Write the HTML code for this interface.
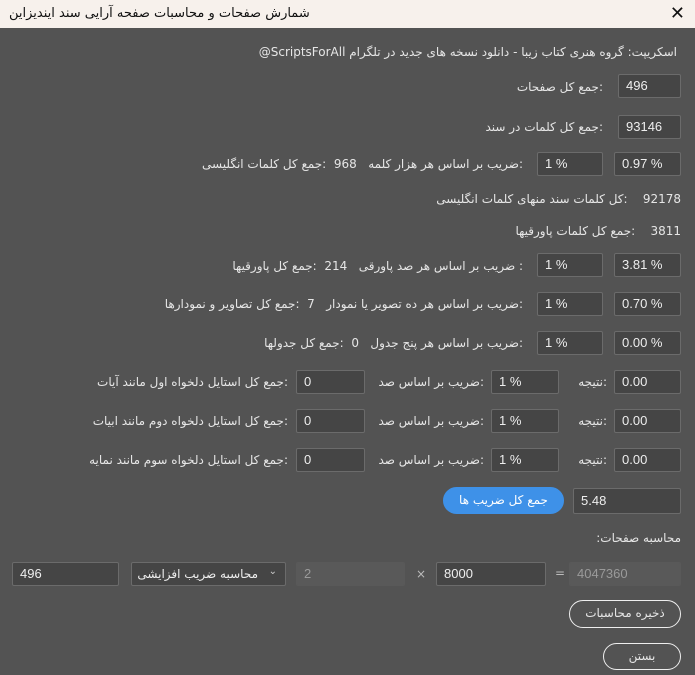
<!DOCTYPE html>
<html><head><meta charset="utf-8"><style>
body{margin:0;width:695px;height:675px;background:#535353;position:relative;overflow:hidden;font-family:"DejaVu Sans","Liberation Sans",sans-serif;font-size:12px;color:#e6e6e6}
.title{position:absolute;left:0;top:0;width:695px;height:28px;background:#f7f1ec;color:#111;}
.title span{position:absolute;left:9px;top:6px;font-size:13px}
.title b{position:absolute;right:10px;top:3px;font-weight:normal;font-size:18px}
.l{position:absolute;white-space:nowrap;direction:rtl;line-height:14px}
.i{position:absolute;box-sizing:border-box;background:#454545;border:1px solid #6b6b6b;border-radius:2px;color:#eee;padding-left:7px;line-height:22px;font-family:"Liberation Sans",sans-serif;font-size:13px;white-space:nowrap;overflow:hidden}
.d{background:#595959;border-color:#595959;color:#9a9a9a}
.btn{position:absolute;box-sizing:border-box;border:1px solid #eee;border-radius:14px;text-align:center;line-height:25px;direction:rtl}
</style></head><body>
<div class="title"><span>شمارش صفحات و محاسبات صفحه آرایی سند ایندیزاین</span><b>✕</b></div>
<div class="l" style="right:18px;top:45px">اسکریپت: گروه هنری کتاب زیبا - دانلود نسخه های جدید در تلگرام ScriptsForAll@</div>

<div class="i" style="left:618px;top:74px;width:63px;height:24px">496</div>
<div class="l" style="right:92px;top:80px">:جمع کل صفحات</div>
<div class="i" style="left:618px;top:115px;width:63px;height:24px">93146</div>
<div class="l" style="right:92px;top:120px">:جمع کل کلمات در سند</div>

<div class="i" style="left:614px;top:152px;width:67px;height:24px">0.97 %</div>
<div class="i" style="left:537px;top:152px;width:66px;height:24px">1 %</div>
<div class="l" style="right:172px;top:157px">:ضریب بر اساس هر هزار کلمه&nbsp;&nbsp; 968&nbsp; :جمع کل کلمات انگلیسی</div>

<div class="l" style="right:14px;top:192px">92178&nbsp;&nbsp;&nbsp; :کل کلمات سند منهای کلمات انگلیسی</div>
<div class="l" style="right:14px;top:224px">3811&nbsp;&nbsp;&nbsp; :جمع کل کلمات پاورقیها</div>

<div class="i" style="left:614px;top:253px;width:67px;height:24px">3.81 %</div>
<div class="i" style="left:537px;top:253px;width:66px;height:24px">1 %</div>
<div class="l" style="right:172px;top:259px">: ضریب بر اساس هر صد پاورقی&nbsp;&nbsp; 214&nbsp; :جمع کل پاورقیها</div>

<div class="i" style="left:614px;top:292px;width:67px;height:24px">0.70 %</div>
<div class="i" style="left:537px;top:292px;width:66px;height:24px">1 %</div>
<div class="l" style="right:172px;top:297px">:ضریب بر اساس هر ده تصویر یا نمودار&nbsp;&nbsp; 7&nbsp; :جمع کل تصاویر و نمودارها</div>

<div class="i" style="left:614px;top:331px;width:67px;height:24px">0.00 %</div>
<div class="i" style="left:537px;top:331px;width:66px;height:24px">1 %</div>
<div class="l" style="right:172px;top:336px">:ضریب بر اساس هر پنج جدول&nbsp;&nbsp; 0&nbsp; :جمع کل جدولها</div>

<div class="i" style="left:614px;top:370px;width:67px;height:24px">0.00</div>
<div class="l" style="right:88px;top:375px">:نتیجه</div>
<div class="i" style="left:491px;top:370px;width:68px;height:24px">1 %</div>
<div class="l" style="right:211px;top:375px">:ضریب بر اساس صد</div>
<div class="i" style="left:296px;top:370px;width:69px;height:24px">0</div>
<div class="l" style="right:407px;top:375px">:جمع کل استایل دلخواه اول مانند آیات</div>

<div class="i" style="left:614px;top:409px;width:67px;height:24px">0.00</div>
<div class="l" style="right:88px;top:414px">:نتیجه</div>
<div class="i" style="left:491px;top:409px;width:68px;height:24px">1 %</div>
<div class="l" style="right:211px;top:414px">:ضریب بر اساس صد</div>
<div class="i" style="left:296px;top:409px;width:69px;height:24px">0</div>
<div class="l" style="right:407px;top:414px">:جمع کل استایل دلخواه دوم مانند ابیات</div>

<div class="i" style="left:614px;top:448px;width:67px;height:24px">0.00</div>
<div class="l" style="right:88px;top:453px">:نتیجه</div>
<div class="i" style="left:491px;top:448px;width:68px;height:24px">1 %</div>
<div class="l" style="right:211px;top:453px">:ضریب بر اساس صد</div>
<div class="i" style="left:296px;top:448px;width:69px;height:24px">0</div>
<div class="l" style="right:407px;top:453px">:جمع کل استایل دلخواه سوم مانند نمایه</div>

<div class="btn" style="left:443px;top:487px;width:121px;height:27px;background:#3e91e8;border-color:#3e91e8;color:#fff">جمع کل ضریب ها</div>
<div class="i" style="left:573px;top:488px;width:108px;height:26px;line-height:24px">5.48</div>

<div class="l" style="right:14px;top:531px">محاسبه صفحات:</div>
<div class="i" style="left:12px;top:562px;width:107px;height:24px">496</div>
<div class="i" style="left:131px;top:562px;width:155px;height:24px;direction:rtl;padding-right:27px;font-family:'DejaVu Sans',sans-serif;font-size:12px">محاسبه ضریب افزایشی<span style="position:absolute;right:8px;top:-2px;font-size:10px;color:#ccc">⌄</span></div>
<div class="i d" style="left:296px;top:562px;width:109px;height:24px">2</div>
<div class="l" style="left:416px;top:567px;color:#bbb">×</div>
<div class="i" style="left:436px;top:562px;width:110px;height:24px">8000</div>
<div class="l" style="left:555px;top:566px;color:#bbb">=</div>
<div class="i d" style="left:569px;top:562px;width:112px;height:24px">4047360</div>

<div class="btn" style="left:569px;top:600px;width:112px;height:28px">ذخیره محاسبات</div>
<div class="btn" style="left:603px;top:643px;width:78px;height:27px">بستن</div>
</body></html>
